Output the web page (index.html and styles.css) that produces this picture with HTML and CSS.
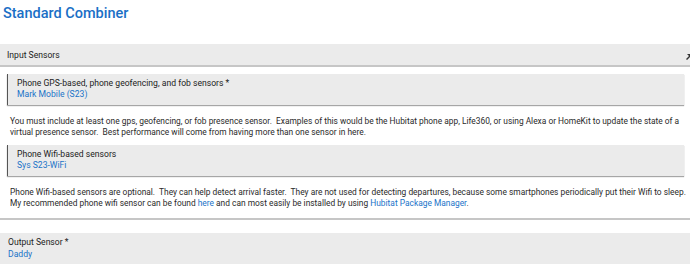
FILE: index.html
```html
<!DOCTYPE html>
<html>
<head>
<meta charset="utf-8">
<link rel="stylesheet" href="styles.css">
</head>
<body>
<h1 class="title">Standard Combiner</h1>
<div class="section-head">
  <span>Input Sensors</span>
  <svg class="collapse-icon" width="8" height="8" viewBox="0 0 8 8"><path d="M2 1h5v5L5 4 2 7 1 6l3-3z" fill="#333"/></svg>
</div>
<div class="input-box">
  <div class="label">Phone GPS-based, phone geofencing, and fob sensors *</div>
  <a class="value">Mark Mobile (S23)</a>
</div>
<p class="para">You must include at least one gps, geofencing, or fob presence sensor.&nbsp; Examples of this would be the Hubitat phone app, Life360, or using Alexa or HomeKit to update the state of a virtual presence sensor.&nbsp; Best performance will come from having more than one sensor in here.</p>
<div class="input-box">
  <div class="label">Phone Wifi-based sensors</div>
  <a class="value">Sys S23-WiFi</a>
</div>
<p class="para">Phone Wifi-based sensors are optional.&nbsp; They can help detect arrival faster.&nbsp; They are not used for detecting departures, because some smartphones periodically put their Wifi to sleep.<br>My recommended phone wifi sensor can be found <a class="link">here</a> and can most easily be installed by using <a class="link">Hubitat Package Manager</a>.</p>
<div class="rule"></div>
<div class="output-box">
  <div class="label">Output Sensor *</div>
  <a class="value">Daddy</a>
</div>
</body>
</html>
```
FILE: styles.css
```css
html, body {
  margin: 0;
  padding: 0;
  background: #fff;
  font-family: Roboto, "Liberation Sans", sans-serif;
  font-size: 8.6px;
  color: #222;
  overflow: hidden;
}
.title {
  margin: 0;
  padding: 4px 0 0 3px;
  height: 40px;
  box-sizing: border-box;
  font-size: 14.5px;
  font-weight: 500;
  color: #1a6fc6;
  line-height: 20px;
}
.section-head {
  position: relative;
  height: 21px;
  background: #ebebeb;
  border-bottom: 2px solid #c6c6c6;
  display: flex;
  align-items: center;
  padding-left: 7px;
  margin-top: 4px;
}
.collapse-icon {
  position: absolute;
  right: -3px;
  top: 9px;
}
.input-box {
  margin: 7px 6px 0 7px;
  background: #ebebeb;
  border-left: 1px solid #555;
  box-shadow: 0 1px 1px rgba(0,0,0,0.35);
  padding: 4px 9px 5px;
  line-height: 11px;
}
.label { color: #222; }
.value, .link { color: #1a73c8; text-decoration: none; }
.value { display: block; }
.para {
  margin: 11px 0 0 10px;
  font-size: 8.4px;
  line-height: 11px;
  color: #2a2a2a;
}
.para + .input-box { margin-top: 7px; }
.rule {
  height: 0;
  border-top: 2px solid #c6c6c6;
  margin-top: 9px;
}
.output-box {
  margin-top: 13px;
  background: #ebebeb;
  padding: 3px 8px 6px;
  line-height: 12px;
}
```
